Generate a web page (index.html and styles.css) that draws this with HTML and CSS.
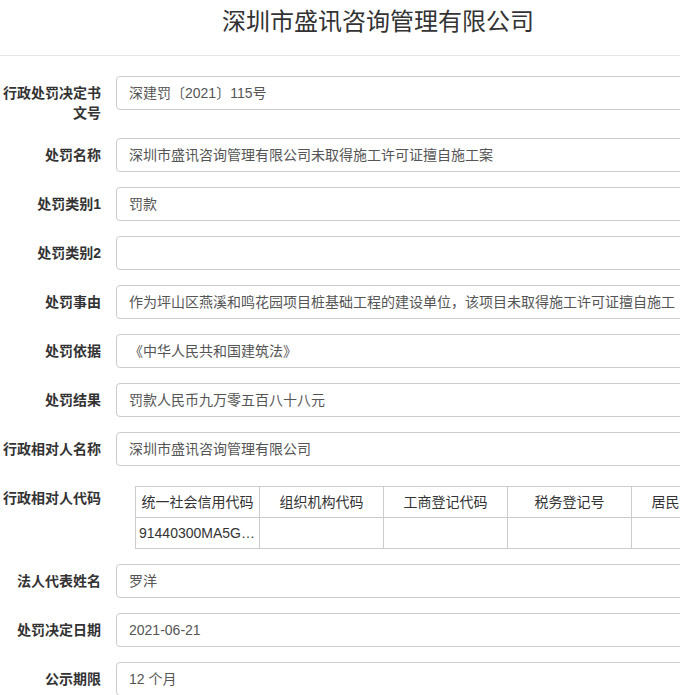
FILE: index.html
```html
<!DOCTYPE html>
<html lang="zh-CN">
<head>
<meta charset="utf-8">
<title>深圳市盛讯咨询管理有限公司</title>
<link rel="stylesheet" href="styles.css">
</head>
<body>
<div class="page">
  <h1 class="title">深圳市盛讯咨询管理有限公司</h1>
  <div class="form">
    <div class="group">
      <div class="label">行政处罚决定书文号</div>
      <div class="control">深建罚〔2021〕115号</div>
    </div>
    <div class="group">
      <div class="label">处罚名称</div>
      <div class="control">深圳市盛讯咨询管理有限公司未取得施工许可证擅自施工案</div>
    </div>
    <div class="group">
      <div class="label">处罚类别1</div>
      <div class="control">罚款</div>
    </div>
    <div class="group">
      <div class="label">处罚类别2</div>
      <div class="control"></div>
    </div>
    <div class="group">
      <div class="label">处罚事由</div>
      <div class="control">作为坪山区燕溪和鸣花园项目桩基础工程的建设单位，该项目未取得施工许可证擅自施工</div>
    </div>
    <div class="group">
      <div class="label">处罚依据</div>
      <div class="control">《中华人民共和国建筑法》</div>
    </div>
    <div class="group">
      <div class="label">处罚结果</div>
      <div class="control">罚款人民币九万零五百八十八元</div>
    </div>
    <div class="group">
      <div class="label">行政相对人名称</div>
      <div class="control">深圳市盛讯咨询管理有限公司</div>
    </div>
    <div class="group">
      <div class="label">行政相对人代码</div>
      <div class="table-wrap">
        <table class="codes">
          <thead>
            <tr><th>统一社会信用代码</th><th>组织机构代码</th><th>工商登记代码</th><th>税务登记号</th><th>居民身份证号</th></tr>
          </thead>
          <tbody>
            <tr><td>91440300MA5GXXXXXX</td><td></td><td></td><td></td><td></td></tr>
          </tbody>
        </table>
      </div>
    </div>
    <div class="group">
      <div class="label">法人代表姓名</div>
      <div class="control">罗洋</div>
    </div>
    <div class="group">
      <div class="label">处罚决定日期</div>
      <div class="control">2021-06-21</div>
    </div>
    <div class="group">
      <div class="label">公示期限</div>
      <div class="control">12 个月</div>
    </div>
  </div>
</div>
</body>
</html>
```
FILE: styles.css
```css
html, body {
  margin: 0;
  padding: 0;
  background: #fff;
  overflow: hidden;
}
body {
  font-family: "Liberation Sans", "Noto Sans CJK SC", sans-serif;
  font-size: 14px;
  color: #333;
}
.page {
  width: 756px;
}
.title {
  margin: 0;
  padding: 7px 0 18px;
  font-size: 24px;
  line-height: 30px;
  font-weight: normal;
  color: #333;
  text-align: center;
  border-bottom: 1px solid #e5e5e5;
}
.form {
  padding-top: 20px;
}
.group {
  display: grid;
  grid-template-columns: 101px 1fr;
  column-gap: 15px;
  margin-bottom: 15px;
}
.label {
  padding-top: 7px;
  line-height: 20px;
  font-weight: bold;
  text-align: right;
  color: #333;
}
.control {
  height: 34px;
  box-sizing: border-box;
  padding: 6px 12px;
  line-height: 20px;
  border: 1px solid #ccc;
  border-radius: 4px;
  color: #555;
  white-space: nowrap;
  overflow: hidden;
}
.table-wrap {
  padding: 5px 0 0 19px;
  overflow: hidden;
}
.codes {
  border-collapse: collapse;
  table-layout: fixed;
  width: 620px;
}
.codes th, .codes td {
  box-sizing: border-box;
  width: 124px;
  border: 1px solid #ccc;
  padding: 5px 3px;
  line-height: 20px;
  font-weight: normal;
  color: #333;
  text-align: center;
  white-space: nowrap;
  overflow: hidden;
  text-overflow: ellipsis;
}
.codes td {
  text-align: left;
}
```
